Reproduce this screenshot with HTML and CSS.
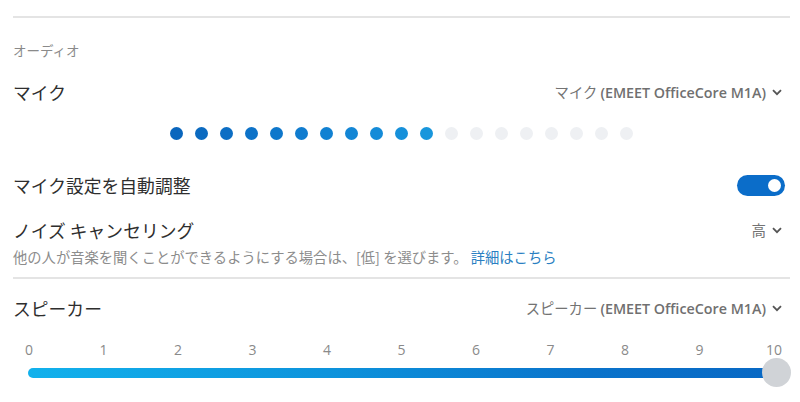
FILE: index.html
```html
<!DOCTYPE html>
<html lang="ja">
<head>
<meta charset="utf-8">
<link rel="stylesheet" href="styles.css">
</head>
<body>
<div class="page">
  <div class="rule rule-top"></div>
  <div class="section-label">オーディオ</div>

  <div class="row row-mic">
    <div class="title">マイク</div>
    <div class="select"><span>マイク <span class="latin">(EMEET OfficeCore M1A)</span></span><svg class="chev" width="10" height="7" viewBox="0 0 10 7"><path d="M1 1.2 L5 5.2 L9 1.2" fill="none" stroke="#555" stroke-width="1.8"/></svg></div>
  </div>

  <div class="dots">
    <span class="dot on"></span><span class="dot on"></span><span class="dot on"></span><span class="dot on"></span><span class="dot on"></span><span class="dot on"></span><span class="dot on"></span><span class="dot on"></span><span class="dot on"></span><span class="dot on"></span><span class="dot on"></span><span class="dot"></span><span class="dot"></span><span class="dot"></span><span class="dot"></span><span class="dot"></span><span class="dot"></span><span class="dot"></span><span class="dot"></span>
  </div>

  <div class="row row-auto">
    <div class="title">マイク設定を自動調整</div>
    <div class="toggle"><span class="knob"></span></div>
  </div>

  <div class="row row-noise">
    <div class="title">ノイズ キャンセリング</div>
    <div class="select select-short"><span>高</span><svg class="chev" width="10" height="7" viewBox="0 0 10 7"><path d="M1 1.2 L5 5.2 L9 1.2" fill="none" stroke="#555" stroke-width="1.8"/></svg></div>
  </div>
  <div class="desc">他の人が音楽を聞くことができるようにする場合は、[低] を選びます。 <a class="link">詳細はこちら</a></div>

  <div class="rule rule-mid"></div>

  <div class="row row-speaker">
    <div class="title">スピーカー</div>
    <div class="select"><span>スピーカー <span class="latin">(EMEET OfficeCore M1A)</span></span><svg class="chev" width="10" height="7" viewBox="0 0 10 7"><path d="M1 1.2 L5 5.2 L9 1.2" fill="none" stroke="#555" stroke-width="1.8"/></svg></div>
  </div>

  <div class="ticks">
    <span>0</span><span>1</span><span>2</span><span>3</span><span>4</span><span>5</span><span>6</span><span>7</span><span>8</span><span>9</span><span>10</span>
  </div>
  <div class="slider">
    <div class="track"></div>
    <div class="thumb"></div>
  </div>
</div>
</body>
</html>
```

FILE: styles.css
```css
html, body {
  margin: 0;
  padding: 0;
  background: #ffffff;
}
body {
  font-family: "Noto Sans CJK JP", "Open Sans", sans-serif;
  color: #2e2e2e;
  width: 800px;
  height: 402px;
  overflow: hidden;
}
.page {
  display: flex;
  flex-direction: column;
  padding: 0 10px 0 13px;
}
.rule {
  height: 2px;
  background: #e4e4e4;
}
.rule-top { margin-top: 16px; }
.section-label {
  margin-top: 22px;
  font-size: 13.5px;
  line-height: 20px;
  height: 20px;
  color: #8a8a8a;
}
.row {
  display: flex;
  justify-content: space-between;
  align-items: center;
  height: 24px;
}
.title {
  font-size: 17.8px;
  line-height: 24px;
  color: #2e2e2e;
  white-space: nowrap;
}
.row-mic { margin-top: 20px; }
.select {
  display: flex;
  align-items: center;
  font-size: 14.3px;
  line-height: 24px;
  color: #737373;
  margin-right: 8px;
  white-space: nowrap;
}
.select .latin {
  font-family: "Open Sans", sans-serif;
  font-weight: 600;
  color: #707070;
}
.chev {
  margin-left: 6px;
}
.dots {
  display: flex;
  gap: 12px;
  margin-top: 23px;
  margin-left: 157px;
}
.dot {
  width: 13px;
  height: 13px;
  border-radius: 50%;
  background: #eef0f3;
}
.dot.on { background: #0d72c8; }
.dot.on:nth-child(1) { background: #0a66bd; }
.dot.on:nth-child(2) { background: #0b6ac0; }
.dot.on:nth-child(3) { background: #0c6ec4; }
.dot.on:nth-child(4) { background: #0d72c8; }
.dot.on:nth-child(5) { background: #0e77cb; }
.dot.on:nth-child(6) { background: #107ccf; }
.dot.on:nth-child(7) { background: #1181d2; }
.dot.on:nth-child(8) { background: #1386d5; }
.dot.on:nth-child(9) { background: #148bd8; }
.dot.on:nth-child(10) { background: #1690da; }
.dot.on:nth-child(11) { background: #1896dc; }
.row-auto {
  margin-top: 34px;
  height: 22px;
}
.toggle {
  width: 48px;
  height: 21px;
  border-radius: 11px;
  background: #0b6dc9;
  margin-right: 5px;
  display: flex;
  align-items: center;
  justify-content: flex-end;
  padding-right: 4px;
  box-sizing: border-box;
}
.knob {
  width: 13px;
  height: 13px;
  border-radius: 50%;
  background: #ffffff;
}
.row-noise { margin-top: 22px; }
.select-short { font-size: 14.5px; }
.desc {
  margin-top: 5px;
  font-size: 14.3px;
  line-height: 20px;
  height: 20px;
  color: #8c8c8c;
  white-space: nowrap;
}
.link {
  color: #2a7fc2;
}
.rule-mid { margin-top: 10px; }
.row-speaker { margin-top: 17px; }
.ticks {
  margin-top: 22px;
  margin-left: 6px;
  margin-right: 6px;
  display: flex;
  justify-content: space-between;
  font-family: "Open Sans", sans-serif;
  font-size: 14px;
  line-height: 16px;
  height: 16px;
  color: #8a8a8a;
}
.ticks span {
  width: 20px;
  text-align: center;
}
.slider {
  position: relative;
  height: 30px;
  margin-left: 15px;
  margin-right: 14px;
  display: flex;
  align-items: center;
}
.track {
  flex: 1;
  height: 10px;
  border-radius: 5px;
  background: linear-gradient(to right, #12b1ec 0%, #0d93dc 40%, #0a73cb 75%, #0868c4 100%);
}
.thumb {
  position: absolute;
  right: -15px;
  top: 0;
  width: 29px;
  height: 29px;
  border-radius: 50%;
  background: #d0d3d7;
}
```
